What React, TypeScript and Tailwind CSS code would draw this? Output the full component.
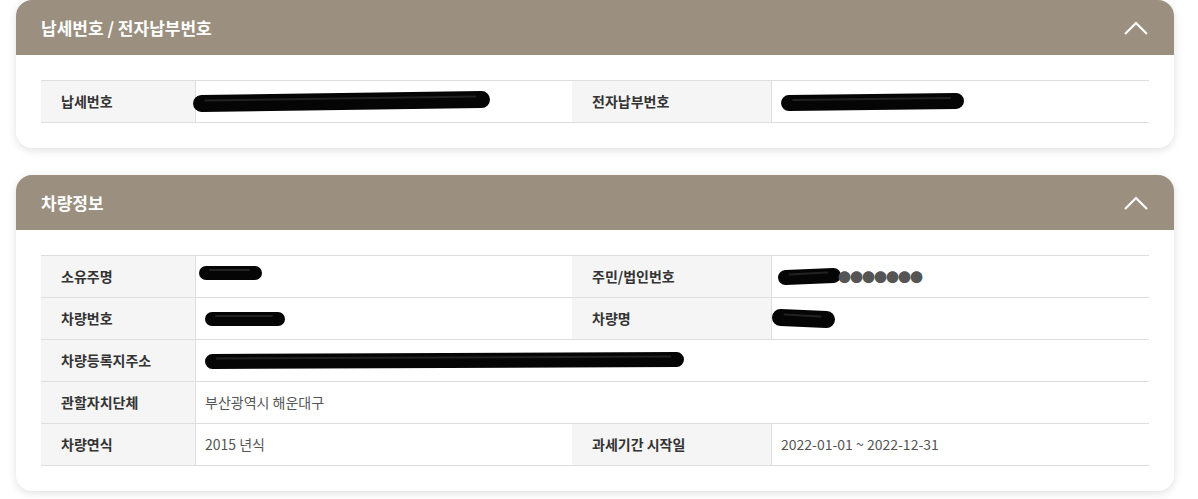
import React from "react";

const font = { fontFamily: '"Malgun Gothic", "Noto Sans CJK KR", "Noto Sans", sans-serif' };

function Scribble({ w, h = 18, tilt = 0, className = "" }: { w: number; h?: number; tilt?: number; className?: string }) {
    const sw = h - 2;
    const y1 = h / 2 + tilt;
    const y2 = h / 2 - tilt;
    return (
        <svg width={w} height={h + 2} viewBox={`0 -1 ${w} ${h + 2}`} className={`inline-block shrink-0 ${className}`}>
            <path d={`M${sw / 2} ${y1} L${w - sw / 2} ${y2}`} stroke="#050505" strokeWidth={sw} strokeLinecap="round" fill="none" />
            <path d={`M${sw / 2 + 4} ${y1 - 3} L${w - sw / 2 - 6} ${y2 - 3}`} stroke="#222" strokeWidth={2} strokeLinecap="round" fill="none" />
        </svg>
    );
}

function Chevron() {
    return (
        <svg width="26" height="16" viewBox="0 0 26 16" className="shrink-0">
            <polyline points="2,14 13,3 24,14" fill="none" stroke="#fff" strokeWidth="2.2" />
        </svg>
    );
}

function Label({ children }: { children: React.ReactNode }) {
    return (
        <div className="flex items-center h-[42px] px-5 bg-[#f5f5f5] border-b border-[#dedede] text-[14px] font-semibold text-[#333]">
            {children}
        </div>
    );
}

function Value({ children, className = "" }: { children?: React.ReactNode; className?: string }) {
    return (
        <div className={`flex items-center h-[42px] px-[9px] border-b border-l border-[#dedede] text-[14px] text-[#555] ${className}`}>
            {children}
        </div>
    );
}

function Card({ title, children }: { title: string; children: React.ReactNode }) {
    return (
        <div className="ml-4 mr-6 rounded-2xl bg-white shadow-[0_2px_8px_rgba(0,0,0,0.13)] overflow-hidden">
            <div className="flex items-center justify-between h-[55px] pl-[25px] pr-[25px] bg-[#9b8f7f]">
                <span className="text-white text-[17px] font-bold">{title}</span>
                <Chevron />
            </div>
            <div className="px-[25px] pt-[25px] pb-[25px]">
                <div className="grid grid-cols-[154px_377px_199px_1fr] border-t border-[#dedede]">{children}</div>
            </div>
        </div>
    );
}

export default function App() {
    return (
        <div className="w-[1198px] h-[499px] bg-white flex flex-col gap-[27px]" style={font}>
            <Card title="납세번호 / 전자납부번호">
                <Label>납세번호</Label>
                <Value className="pl-0">
                    <Scribble w={297} h={19} tilt={2} className="-ml-[3px]" />
                </Value>
                <Label>전자납부번호</Label>
                <Value>
                    <Scribble w={183} h={18} tilt={1} />
                </Value>
            </Card>

            <Card title="차량정보">
                <Label>소유주명</Label>
                <Value className="pl-[3px]">
                    <Scribble w={63} h={16} className="-mt-[8px]" />
                </Value>
                <Label>주민/법인번호</Label>
                <Value className="pl-[6px]">
                    <Scribble w={63} h={17} tilt={1} />
                    <span className="-ml-[3px] text-[13px] tracking-[-1px] text-[#555]">●●●●●●●</span>
                </Value>

                <Label>차량번호</Label>
                <Value>
                    <Scribble w={80} h={16} />
                </Value>
                <Label>차량명</Label>
                <Value className="pl-0">
                    <Scribble w={63} h={19} tilt={-1} />
                </Value>

                <Label>차량등록지주소</Label>
                <Value className="col-span-3">
                    <Scribble w={479} h={17} tilt={1} />
                </Value>

                <Label>관할자치단체</Label>
                <Value className="col-span-3">부산광역시 해운대구</Value>

                <Label>차량연식</Label>
                <Value>2015 년식</Value>
                <Label>과세기간 시작일</Label>
                <Value>2022-01-01 ~ 2022-12-31</Value>
            </Card>
        </div>
    );
}
